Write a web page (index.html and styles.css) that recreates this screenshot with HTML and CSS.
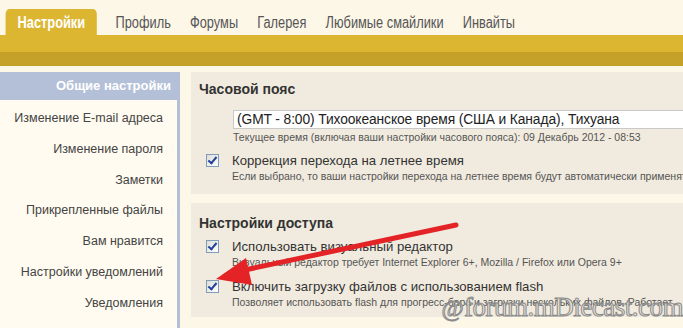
FILE: index.html
```html
<!DOCTYPE html>
<html lang="ru">
<head>
    <meta charset="UTF-8">
    <title>Настройки</title>
    <link rel="stylesheet" href="styles.css">
</head>
<body>
<div class="top">
    <div class="tabs">
        <a class="tab active">Настройки</a>
        <a class="tab">Профиль</a>
        <a class="tab">Форумы</a>
        <a class="tab">Галерея</a>
        <a class="tab">Любимые смайлики</a>
        <a class="tab">Инвайты</a>
    </div>
    <div class="bar"></div>
    <div class="bar-dark"></div>
</div>

<div class="layout">
    <div class="sidebar">
        <div class="side-title">Общие настройки</div>
        <ul class="side-menu">
            <li>Изменение E-mail адреса</li>
            <li>Изменение пароля</li>
            <li>Заметки</li>
            <li>Прикрепленные файлы</li>
            <li>Вам нравится</li>
            <li>Настройки уведомлений</li>
            <li>Уведомления</li>
        </ul>
    </div>

    <div class="main">
        <div class="panel panel-tz">
            <h3>Часовой пояс</h3>
            <div class="indent">
                <div class="select">(GMT - 8:00) Тихоокеанское время (США и Канада), Тихуана</div>
                <div class="hint">Текущее время (включая ваши настройки часового пояса): 09 Декабрь 2012 - 08:53</div>
            </div>
            <div class="option">
                <span class="check"></span>
                <div>
                    <div class="label">Коррекция перехода на летнее время</div>
                    <div class="hint">Если выбрано, то ваши настройки перехода на летнее время будут автоматически применяться</div>
                </div>
            </div>
        </div>

        <div class="panel panel-access">
            <h3>Настройки доступа</h3>
            <div class="option">
                <span class="check"></span>
                <div>
                    <div class="label">Использовать визуальный редактор</div>
                    <div class="hint">Визуальный редактор требует Internet Explorer 6+, Mozilla / Firefox или Opera 9+</div>
                </div>
            </div>
            <div class="option">
                <span class="check"></span>
                <div>
                    <div class="label">Включить загрузку файлов с использованием flash</div>
                    <div class="hint">Позволяет использовать flash для прогресс-бара и загрузки нескольких файлов. Работает</div>
                </div>
            </div>
        </div>
    </div>
</div>

<!-- стрелка поверх скриншота -->
<svg class="arrow" width="683" height="328" viewBox="0 0 683 328">
    <line x1="456" y1="225" x2="240" y2="271" stroke="#e32326" stroke-width="5" stroke-linecap="round"/>
    <polygon points="216,279 246,258 252,285" fill="#e32326"/>
</svg>

<div class="watermark"><span class="wm-swirl">@</span>forum.mDiecast.com</div>
</body>
</html>
```

FILE: styles.css
```css
* {
    margin: 0;
    padding: 0;
    box-sizing: border-box;
}

body {
    width: 683px;
    height: 328px;
    overflow: hidden;
    position: relative;
    background: #fdf7e8;
    font-family: "Liberation Sans", Arial, sans-serif;
    color: #333;
}

.top {
    padding-top: 9px;
}

/* узкий шрифт вкладок: сжимаем по горизонтали */
.tabs {
    display: flex;
    align-items: center;
    height: 26px;
    padding-left: 7px;
    font-size: 16px;
    transform: scaleX(0.8);
    transform-origin: left center;
    white-space: nowrap;
}

.tab {
    color: #555;
    padding: 0 12px;
    height: 26px;
    line-height: 27px;
}

.tab.active {
    background: #dcb631;
    color: #fff;
    font-weight: bold;
    border-radius: 5px 5px 0 0;
    padding: 0 15px;
    margin-right: 11px;
}

.bar {
    height: 17px;
    background: #dcb631;
}

.bar-dark {
    height: 14px;
    background: #c5a12a;
}

.layout {
    display: flex;
    margin-top: 6px;
    gap: 11px;
}

.sidebar {
    width: 180px;
    flex-shrink: 0;
    height: 260px;
    background: #fffbf0;
    border-right: 3px solid #b4c0d7;
}

.side-title {
    background: #b4c0d7;
    color: #fff;
    font-weight: bold;
    font-size: 13px;
    height: 28px;
    line-height: 28px;
    text-align: right;
    padding-right: 9px;
    margin-right: -3px;
}

.side-menu {
    list-style: none;
    padding-top: 3px;
}

.side-menu li {
    font-size: 12.5px;
    color: #444;
    text-align: right;
    padding-right: 14px;
    height: 30.8px;
    line-height: 30px;
}

.main {
    flex: 1;
    min-width: 0;
    overflow: hidden;
    display: flex;
    flex-direction: column;
    gap: 9px;
}

.panel {
    background: #f1ebdf;
    padding: 8px 0 0 8px;
    white-space: nowrap;
}

.panel-tz {
    height: 122px;
}

.panel-access {
    height: 114px;
    padding-top: 11px;
}

.panel h3 {
    font-size: 14px;
    font-weight: bold;
    color: #333;
    line-height: 18px;
    margin-bottom: 6px;
}

.panel-tz h3 {
    margin-bottom: 12px;
}

.indent {
    padding-left: 34px;
}

.select {
    background: #fff;
    border: 1px solid #c9c9c9;
    border-right: none;
    height: 19px;
    line-height: 17px;
    font-size: 13.8px;
    letter-spacing: -0.1px;
    color: #222;
    padding-left: 3px;
    width: 620px;
}

.hint {
    font-size: 10.5px;
    color: #555;
    line-height: 15px;
}

.indent .hint {
    margin-top: 1px;
}

.option {
    display: flex;
    align-items: flex-start;
    gap: 13px;
    margin-top: 7px;
    padding-left: 7px;
}

.panel-access .option {
    margin-top: 4px;
    margin-bottom: 8px;
}

.label {
    font-size: 13.2px;
    color: #333;
    line-height: 17px;
}

.check {
    width: 13px;
    height: 13px;
    margin-top: 2px;
    border: 1px solid #7f9db9;
    background: linear-gradient(135deg, #dcdcd6, #fff);
    position: relative;
    flex-shrink: 0;
}

.check::after {
    content: "";
    position: absolute;
    left: 3px;
    top: 0;
    width: 3px;
    height: 7px;
    border: solid #21419c;
    border-width: 0 2px 2px 0;
    transform: rotate(40deg);
}

.arrow {
    position: absolute;
    left: 0;
    top: 0;
    pointer-events: none;
}

.watermark {
    position: absolute;
    right: 0;
    bottom: 5px;
    font-family: "Liberation Serif", serif;
    font-size: 27px;
    color: #e8e4dc;
    -webkit-text-stroke: 1px #8a8a8a;
    letter-spacing: -0.5px;
}

.wm-swirl {
    font-size: 24px;
    margin-right: 1px;
}
```
